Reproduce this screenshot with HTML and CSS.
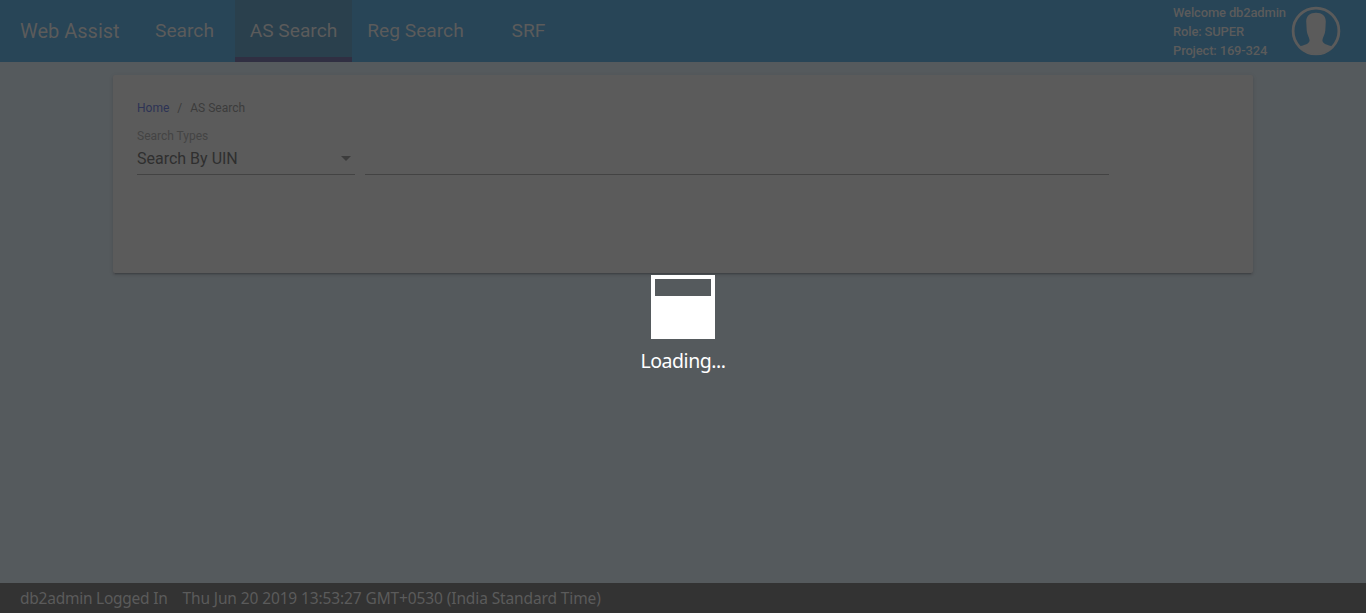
FILE: index.html
```html
<!DOCTYPE html>
<html lang="en">
<head>
<meta charset="utf-8">
<title>Web Assist</title>
<link rel="stylesheet" href="styles.css">
</head>
<body>
<div class="app">
  <header class="header">
    <div class="brand">Web Assist</div>
    <nav class="nav">
      <a class="tab tab-search">Search</a>
      <a class="tab tab-as active">AS Search</a>
      <a class="tab tab-reg">Reg Search</a>
      <a class="tab tab-srf">SRF</a>
    </nav>
    <div class="user">
      <div class="user-info">
        <div>Welcome db2admin</div>
        <div>Role: SUPER</div>
        <div>Project: 169-324</div>
      </div>
      <svg class="avatar" viewBox="0 0 50 50" width="50" height="50">
        <circle cx="25" cy="25" r="22.9" fill="none" stroke="#5b5b5b" stroke-width="2.8"/>
        <path fill="#5b5b5b" d="M25 6.8C31 6.8 34.8 10 34.8 15.5L34.3 24.5C34 28.5 31.8 31 31.4 34.2C31.5 38 36.5 38.6 42.2 40.8A24 24 0 0 1 7.8 40.8C13.5 38.6 18.5 38 18.6 34.2C18.2 31 16 28.5 15.7 24.5L15.2 15.5C15.2 10 19 6.8 25 6.8Z"/>
      </svg>
    </div>
  </header>
  <main class="content">
    <section class="card">
      <div class="breadcrumb"><a class="home">Home</a><span class="sep">/</span><span class="crumb">AS Search</span></div>
      <div class="fields">
        <div class="select">
          <div class="label">Search Types</div>
          <div class="value"><span>Search By UIN</span><span class="caret"></span></div>
        </div>
        <div class="input"></div>
      </div>
    </section>
  </main>
  <footer class="footer"><span class="login">db2admin Logged In</span><span class="clock">Thu Jun 20 2019 13:53:27 GMT+0530 (India Standard Time)</span></footer>
</div>
<div class="loading">
  <div class="spinner"><div class="spinner-gap"></div></div>
  <div class="loading-text">Loading...</div>
</div>
</body>
</html>
```
FILE: styles.css
```css
* { box-sizing: border-box; }
body {
  margin: 0;
  font-family: Roboto, "Liberation Sans", sans-serif;
  background: #555a5d;
  overflow: hidden;
}
.app {
  display: flex;
  flex-direction: column;
  height: 100vh;
}
.header {
  display: flex;
  height: 62px;
  background: #284557;
  color: #5b5b5b;
}
.brand {
  width: 120px;
  padding-left: 20px;
  font-size: 20px;
  line-height: 62px;
  white-space: nowrap;
}
.nav {
  display: flex;
  margin-left: 14px;
}
.tab {
  font-size: 19.2px;
  line-height: 61px;
  text-align: center;
  white-space: nowrap;
}
.tab-search { width: 101px; }
.tab-as { width: 117px; }
.tab-reg { width: 127px; }
.tab-srf { width: 99px; }
.active {
  background: #2a404d;
  border-bottom: 5px solid #302f42;
}
.user {
  display: flex;
  margin-left: auto;
  padding-right: 25px;
}
.user-info {
  width: 118px;
  padding-top: 3px;
  font-size: 13px;
  line-height: 19px;
  font-weight: 500;
  letter-spacing: -.16px;
  white-space: nowrap;
}
.avatar { margin-top: 6px; }
.content {
  flex: 1;
  padding: 13px 113px;
}
.card {
  height: 198px;
  padding: 25px 24px;
  background: #5b5b5b;
  border-radius: 2px;
  box-shadow: 0 3px 1px -2px rgba(0, 0, 0, .12), 0 2px 2px 0 rgba(0, 0, 0, .1), 0 1px 5px 0 rgba(0, 0, 0, .08);
}
.breadcrumb {
  display: flex;
  height: 17px;
  font-size: 12px;
  line-height: 17px;
  color: #3c3c3c;
}
.home { color: #2d3355; }
.sep { margin: 0 8px; }
.fields {
  display: flex;
  gap: 10px;
  height: 58px;
}
.select {
  width: 218px;
  border-bottom: 1px solid #434343;
}
.label {
  padding-top: 11px;
  font-size: 12px;
  line-height: 17px;
  color: #444;
}
.value {
  display: flex;
  align-items: center;
  justify-content: space-between;
  padding-right: 4px;
  font-size: 16px;
  line-height: 28px;
  color: #2f2f2f;
}
.caret {
  margin-bottom: 1px;
  border: 5px solid transparent;
  border-top-color: #3c3c3c;
  border-bottom: 0;
}
.input {
  width: 744px;
  border-bottom: 1px solid #434343;
}
.footer {
  display: flex;
  gap: 15px;
  height: 30px;
  padding-left: 20px;
  background: #333;
  color: #5b5b5b;
  font: 15.5px/31px "Noto Sans", "Open Sans", sans-serif;
  white-space: nowrap;
}
.login { letter-spacing: -.25px; }
.clock { letter-spacing: -.12px; }
.loading {
  position: absolute;
  inset: 0;
  display: flex;
  flex-direction: column;
  align-items: center;
  padding-top: 275px;
}
.spinner {
  width: 64px;
  height: 64px;
  padding: 4px;
  background: #fff;
}
.spinner-gap {
  height: 17px;
  background: #555a5d;
}
.loading-text {
  margin-top: 8px;
  color: #fff;
  font: 19.5px/28px "Noto Sans", "Open Sans", sans-serif;
  letter-spacing: -.48px;
}
```
